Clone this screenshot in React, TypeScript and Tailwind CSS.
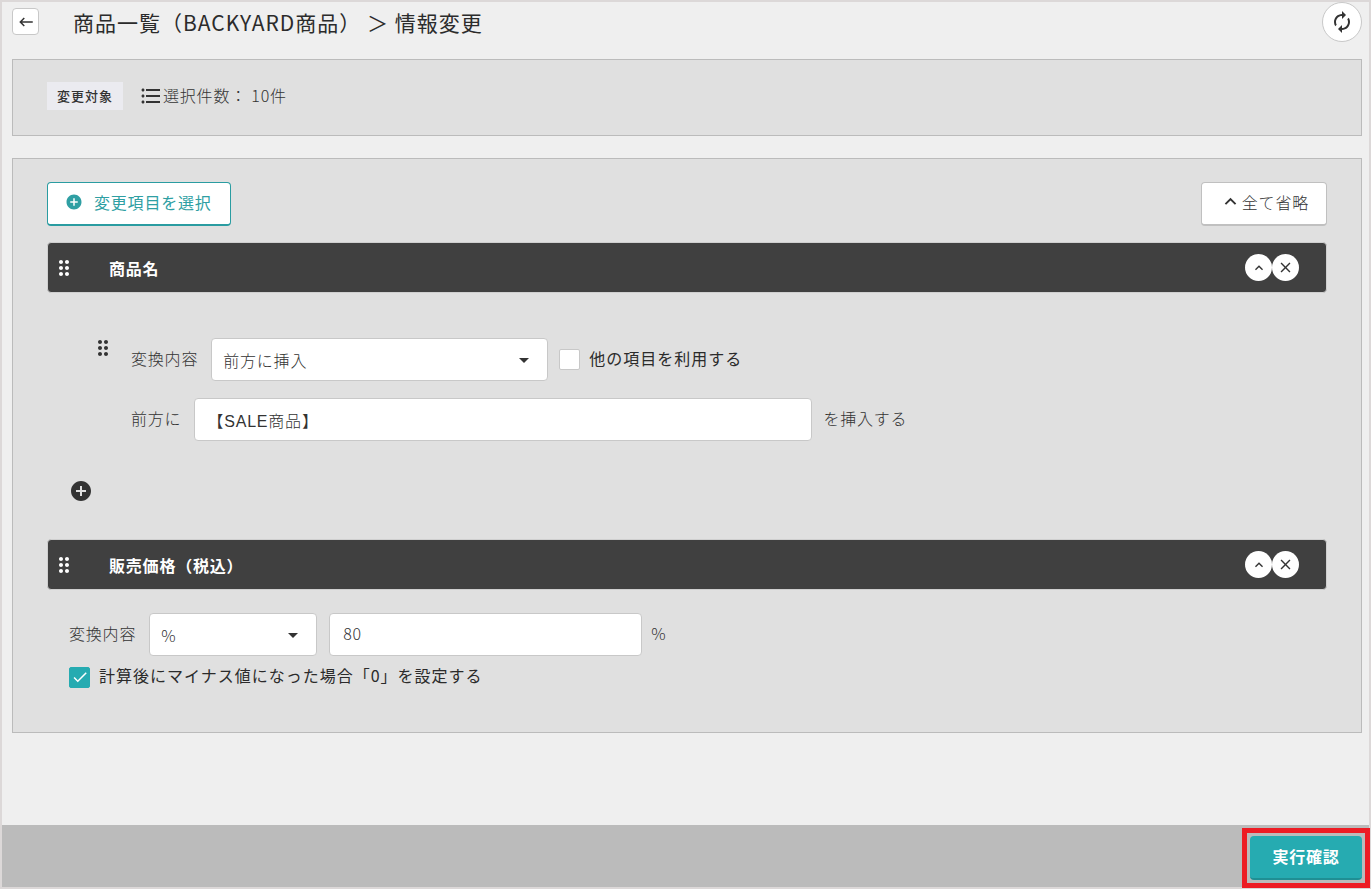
import { useState, type ReactNode } from 'react';
import {
  MdAddCircle,
  MdArrowDropDown,
  MdAutorenew,
  MdCheck,
  MdClose,
  MdDragIndicator,
  MdFormatListBulleted,
  MdKeyboardArrowUp,
  MdKeyboardBackspace,
} from 'react-icons/md';

const fieldClass =
  'h-[43px] rounded border border-[#c8c8c8] bg-white text-[#333] outline-none focus:border-[#26abb1]';

function SelectBox({
  id,
  options,
  className,
}: {
  id: string;
  options: string[];
  className: string;
}) {
  return (
    <div className={`relative ${className}`}>
      <select id={id} className={`${fieldClass} w-full appearance-none pl-[11px] pr-10`}>
        {options.map((option) => (
          <option key={option}>{option}</option>
        ))}
      </select>
      <MdArrowDropDown className="pointer-events-none absolute right-3 top-[10px] size-6 text-[#333]" />
    </div>
  );
}

function CheckBox({
  id,
  initial,
  children,
}: {
  id: string;
  initial: boolean;
  children: ReactNode;
}) {
  const [checked, setChecked] = useState(initial);
  return (
    <div className="flex items-center gap-[9px]">
      <span className="relative flex size-[21px]">
        <input
          id={id}
          type="checkbox"
          checked={checked}
          onChange={(event) => setChecked(event.target.checked)}
          className="size-[21px] appearance-none rounded-xs border border-[#c8c8c8] bg-white checked:border-[#26abb1] checked:bg-[#26abb1]"
        />
        {checked && (
          <MdCheck className="pointer-events-none absolute inset-0 m-auto size-[18px] text-white" />
        )}
      </span>
      <label htmlFor={id} className="pb-1 font-normal tracking-[1px] text-[#2b2b2b]">
        {children}
      </label>
    </div>
  );
}

function SectionHeader({ title }: { title: string }) {
  return (
    <div className="flex h-[51px] items-center rounded border border-[#cfcfcf] bg-[#404040] pl-1 pr-[27px] text-white">
      <MdDragIndicator className="size-6" />
      <h2 className="ml-[33px] flex-1 font-bold">{title}</h2>
      <button
        type="button"
        aria-label="省略"
        className="flex size-[27px] items-center justify-center rounded-full bg-white text-[#333]"
      >
        <MdKeyboardArrowUp className="size-4" />
      </button>
      <button
        type="button"
        aria-label="削除"
        className="flex size-[27px] items-center justify-center rounded-full bg-white text-[#333]"
      >
        <MdClose className="size-[17px]" />
      </button>
    </div>
  );
}

export default function App() {
  return (
    <div className="flex min-h-screen flex-col border-2 border-[#dcd8d8] bg-[#efefef] font-['Noto_Sans_CJK_JP',sans-serif] text-base tracking-wider text-[#333]">
      <header className="flex h-[57px] items-start pl-[10px] pr-[7px]">
        <button
          type="button"
          aria-label="戻る"
          className="mt-[6px] flex size-[27px] items-center justify-center rounded border border-[#c8c8c8] bg-white"
        >
          <MdKeyboardBackspace className="size-[18px]" />
        </button>
        <h1 className="ml-[34px] mt-1 flex-1 text-[21px] leading-8 tracking-[1px] text-[#2b2b2b]">
          商品一覧（BACKYARD商品） ＞ 情報変更
        </h1>
        <button
          type="button"
          aria-label="更新"
          className="flex size-10 items-center justify-center rounded-full border border-[#c8c8c8] bg-white"
        >
          <MdAutorenew className="size-6" />
        </button>
      </header>

      <main className="mb-auto flex flex-col gap-[22px] pl-[10px] pr-[7px]">
        <section className="flex h-[77px] items-center border border-[#bbb] bg-[#e0e0e0] px-[34px] pb-1 font-light">
          <span className="bg-[#ebebf0] px-[10px] py-1 text-[13px] leading-5 font-medium tracking-[1px]">
            変更対象
          </span>
          <MdFormatListBulleted className="ml-4 size-6" />
          <span className="pb-[2px]">選択件数： 10件</span>
        </section>

        <section className="border border-[#bbb] bg-[#e0e0e0] px-[34px] pb-[41px] pt-[23px] font-light">
          <div className="flex justify-between">
            <button
              type="button"
              className="flex h-11 items-center gap-[11px] rounded border border-b-2 border-[#2a9ca1] bg-white pb-1 pl-[17px] pr-[18px] font-normal text-[#2f9fa3]"
            >
              <MdAddCircle className="size-[18px]" />
              変更項目を選択
            </button>
            <button
              type="button"
              className="flex h-11 items-center rounded border border-b-2 border-[#c0c0c0] bg-white px-[17px] pb-1"
            >
              <MdKeyboardArrowUp className="size-[23px]" />
              全て省略
            </button>
          </div>

          <div className="mt-4">
            <SectionHeader title="商品名" />
            <div className="flex pl-11 pt-[45px]">
              <MdDragIndicator className="mt-[-2px] size-6" />
              <div className="ml-4 flex flex-col gap-[17px]">
                <div className="flex items-center">
                  <label htmlFor="name-mode" className="pb-1">
                    変換内容
                  </label>
                  <SelectBox
                    id="name-mode"
                    options={['前方に挿入']}
                    className="ml-[13px] mr-[11px] w-[337px]"
                  />
                  <CheckBox id="use-other" initial={false}>
                    他の項目を利用する
                  </CheckBox>
                </div>
                <div className="flex items-center">
                  <label htmlFor="insert-text" className="pb-1">
                    前方に
                  </label>
                  <input
                    id="insert-text"
                    type="text"
                    defaultValue="【SALE商品】"
                    className={`${fieldClass} ml-[13px] mr-[11px] w-[618px] px-3 font-['Liberation_Sans','Noto_Sans_CJK_JP',sans-serif]`}
                  />
                  <span className="pb-1">を挿入する</span>
                </div>
              </div>
            </div>
            <button type="button" aria-label="追加" className="ml-[22px] mt-[38px] block">
              <MdAddCircle className="size-6" />
            </button>
          </div>

          <div className="mt-9">
            <SectionHeader title="販売価格（税込）" />
            <div className="flex items-center pl-[22px] pt-[23px]">
              <label htmlFor="price-mode" className="pb-1">
                変換内容
              </label>
              <SelectBox id="price-mode" options={['%']} className="ml-[13px] w-[168px]" />
              <input
                id="price-value"
                type="text"
                aria-label="値"
                defaultValue="80"
                className={`${fieldClass} ml-3 mr-[9px] w-[313px] px-[13px] pb-1`}
              />
              <span className="pb-1">%</span>
            </div>
            <div className="pl-[22px] pt-[7px]">
              <CheckBox id="zero-floor" initial={true}>
                計算後にマイナス値になった場合「0」を設定する
              </CheckBox>
            </div>
          </div>
        </section>
      </main>

      <footer className="flex justify-end bg-[#bbb] pb-[7px] pr-[7px] pt-[11px]">
        <div className="relative">
          <button
            type="button"
            className="h-11 w-28 rounded border-b-2 border-[#1f8f94] bg-[#26abb1] pb-[2px] font-bold text-white"
          >
            実行確認
          </button>
          <div className="pointer-events-none absolute -inset-2 border-5 border-[#ed1c24]" />
        </div>
      </footer>
    </div>
  );
}
